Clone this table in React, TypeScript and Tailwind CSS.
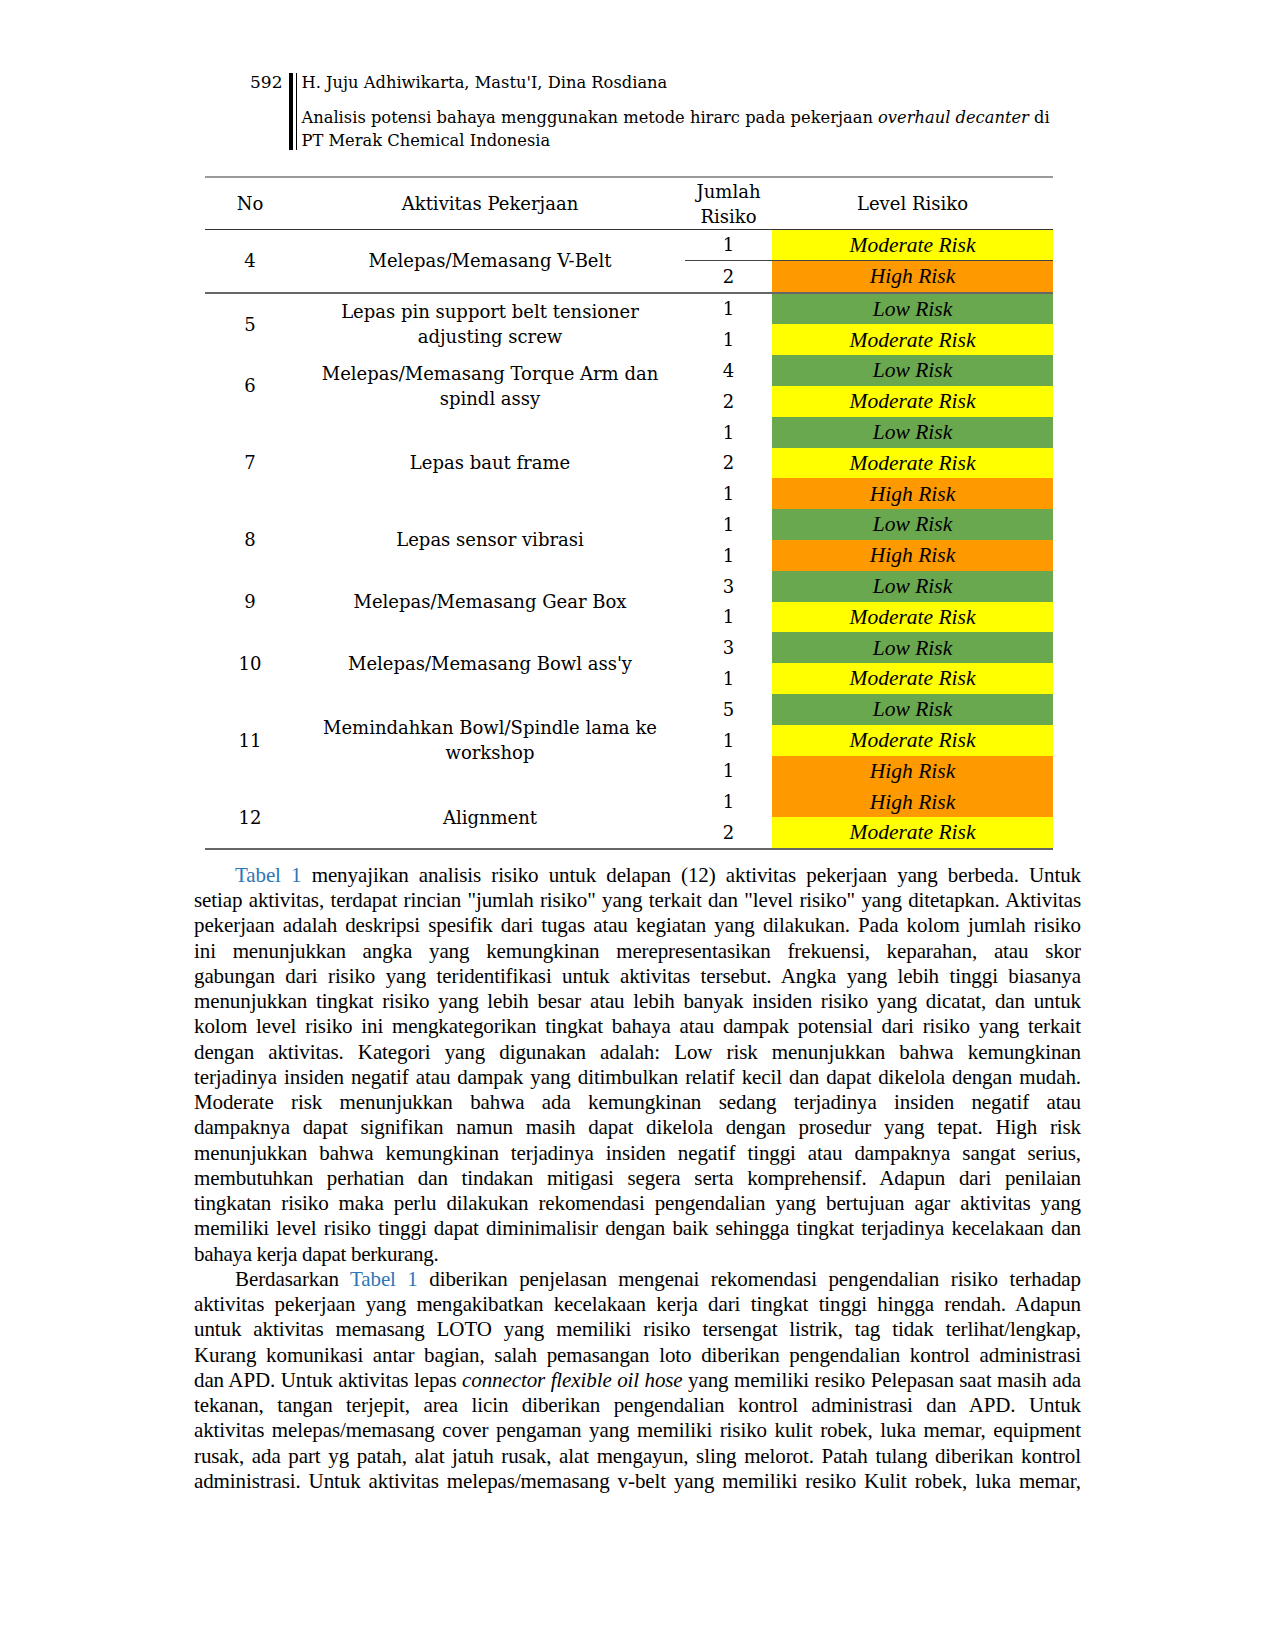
import React from 'react';

type Level = 'L' | 'M' | 'H';

interface Group {
  no: string;
  act: string[];
  rows: [number, Level][];
}

const groups: Group[] = [
  { no: '4', act: ['Melepas/Memasang V-Belt'], rows: [[1, 'M'], [2, 'H']] },
  { no: '5', act: ['Lepas pin support belt tensioner', 'adjusting screw'], rows: [[1, 'L'], [1, 'M']] },
  { no: '6', act: ['Melepas/Memasang Torque Arm dan', 'spindl assy'], rows: [[4, 'L'], [2, 'M']] },
  { no: '7', act: ['Lepas baut frame'], rows: [[1, 'L'], [2, 'M'], [1, 'H']] },
  { no: '8', act: ['Lepas sensor vibrasi'], rows: [[1, 'L'], [1, 'H']] },
  { no: '9', act: ['Melepas/Memasang Gear Box'], rows: [[3, 'L'], [1, 'M']] },
  { no: '10', act: ["Melepas/Memasang Bowl ass'y"], rows: [[3, 'L'], [1, 'M']] },
  { no: '11', act: ['Memindahkan Bowl/Spindle lama ke', 'workshop'], rows: [[5, 'L'], [1, 'M'], [1, 'H']] },
  { no: '12', act: ['Alignment'], rows: [[1, 'H'], [2, 'M']] },
];

const levelStyle = (l: Level) => {
  switch (l) {
    case 'L': return 'bg-[#6aa84f]';
    case 'M': return 'bg-[#ffff00]';
    case 'H': return 'bg-[#ff9900]';
  }
};

const levelText = (l: Level) => {
  switch (l) {
    case 'L': return 'Low Risk';
    case 'M': return 'Moderate Risk';
    case 'H': return 'High Risk';
  }
};

const Link = ({ children }: { children: React.ReactNode }) => (
  <span className="text-[#2e75b6]">{children}</span>
);

// paragraph lines, kept as in the page so the justified breaks match
const para1: React.ReactNode[] = [
  <><Link>Tabel 1</Link> menyajikan analisis risiko untuk delapan (12) aktivitas pekerjaan yang berbeda. Untuk</>,
  'setiap aktivitas, terdapat rincian "jumlah risiko" yang terkait dan "level risiko" yang ditetapkan. Aktivitas',
  'pekerjaan adalah deskripsi spesifik dari tugas atau kegiatan yang dilakukan. Pada kolom jumlah risiko',
  'ini menunjukkan angka yang kemungkinan merepresentasikan frekuensi, keparahan, atau skor',
  'gabungan dari risiko yang teridentifikasi untuk aktivitas tersebut. Angka yang lebih tinggi biasanya',
  'menunjukkan tingkat risiko yang lebih besar atau lebih banyak insiden risiko yang dicatat, dan untuk',
  'kolom level risiko ini mengkategorikan tingkat bahaya atau dampak potensial dari risiko yang terkait',
  'dengan aktivitas. Kategori yang digunakan adalah: Low risk menunjukkan bahwa kemungkinan',
  'terjadinya insiden negatif atau dampak yang ditimbulkan relatif kecil dan dapat dikelola dengan mudah.',
  'Moderate risk menunjukkan bahwa ada kemungkinan sedang terjadinya insiden negatif atau',
  'dampaknya dapat signifikan namun masih dapat dikelola dengan prosedur yang tepat. High risk',
  'menunjukkan bahwa kemungkinan terjadinya insiden negatif tinggi atau dampaknya sangat serius,',
  'membutuhkan perhatian dan tindakan mitigasi segera serta komprehensif. Adapun dari penilaian',
  'tingkatan risiko maka perlu dilakukan rekomendasi pengendalian yang bertujuan agar aktivitas yang',
  'memiliki level risiko tinggi dapat diminimalisir dengan baik sehingga tingkat terjadinya kecelakaan dan',
];

const para2: React.ReactNode[] = [
  <>Berdasarkan <Link>Tabel 1</Link> diberikan penjelasan mengenai rekomendasi pengendalian risiko terhadap</>,
  'aktivitas pekerjaan yang mengakibatkan kecelakaan kerja dari tingkat tinggi hingga rendah. Adapun',
  'untuk aktivitas memasang LOTO yang memiliki risiko tersengat listrik, tag tidak terlihat/lengkap,',
  'Kurang komunikasi antar bagian, salah pemasangan loto diberikan pengendalian kontrol administrasi',
  <>dan APD. Untuk aktivitas lepas <i>connector flexible oil hose</i> yang memiliki resiko Pelepasan saat masih ada</>,
  'tekanan, tangan terjepit, area licin diberikan pengendalian kontrol administrasi dan APD. Untuk',
  'aktivitas melepas/memasang cover pengaman yang memiliki risiko kulit robek, luka memar, equipment',
  'rusak, ada part yg patah, alat jatuh rusak, alat mengayun, sling melorot. Patah tulang diberikan kontrol',
  'administrasi. Untuk aktivitas melepas/memasang v-belt yang memiliki resiko Kulit robek, luka memar,',
];

const Line = ({ children, indent }: { children: React.ReactNode; indent?: boolean }) => (
  <div className={`text-justify [text-align-last:justify] tracking-[-0.1px] ${indent ? 'pl-[41px]' : ''}`}>
    {children}
  </div>
);

const App = () => {
  return (
    <div className="min-h-[1650px] w-[1275px] bg-white text-black">
      {/* running head */}
      <div className="flex pt-[71px] pl-[250px] font-['DejaVu_Serif',serif]">
        <div className="pr-[7px] text-[17px] leading-[23px]">592</div>
        <div className="my-[2px] flex">
          <div className="w-[4px] bg-black" />
          <div className="ml-[3px] w-[1px] bg-black" />
        </div>
        <div className="pl-[4px] text-[16.3px] leading-[23px] whitespace-nowrap">
          <div>H. Juju Adhiwikarta, Mastu'I, Dina Rosdiana</div>
          <div className="mt-[12px]">
            Analisis potensi bahaya menggunakan metode hirarc pada pekerjaan <i>overhaul decanter</i> di
          </div>
          <div>PT Merak Chemical Indonesia</div>
        </div>
      </div>

      {/* table */}
      <div className="ml-[205px] mt-[24px] w-[848px] font-['DejaVu_Serif',serif] text-[18px]">
        <div className="flex h-[54px] items-center border-t-2 border-b border-t-[#9a9a9a] border-b-[#333] text-center leading-[25px]">
          <div className="w-[90px]">No</div>
          <div className="w-[390px]">Aktivitas Pekerjaan</div>
          <div className="w-[87px]">Jumlah<br />Risiko</div>
          <div className="flex-1">Level Risiko</div>
        </div>

        {groups.map((g, gi) => (
          <div key={g.no} className={`flex ${gi === 0 ? 'border-b-2 border-[#666]' : ''}`}>
            <div className="flex w-[90px] items-center justify-center">{g.no}</div>
            <div className="flex w-[390px] flex-col items-center justify-center text-center leading-[25px]">
              {g.act.map(a => <div key={a}>{a}</div>)}
            </div>
            <div className="flex-1">
              {g.rows.map(([n, l], ri) => (
                <div
                  key={ri}
                  className={`flex h-[30.8px] ${gi === 0 && ri === 0 ? 'border-b border-[#444]' : ''}`}
                >
                  <div className="flex w-[87px] items-center justify-center">{n}</div>
                  <div className={`flex flex-1 items-center justify-center font-['Liberation_Serif',serif] text-[21.5px] italic ${levelStyle(l)}`}>
                    {levelText(l)}
                  </div>
                </div>
              ))}
            </div>
          </div>
        ))}
        <div className="h-[2px] bg-[#666]" />
      </div>

      {/* body text */}
      <div className="ml-[194px] mt-[13px] w-[887px] font-['Liberation_Serif',serif] text-[21px] leading-[25.25px]">
        {para1.map((t, i) => <Line key={i} indent={i === 0}>{t}</Line>)}
        <div className="tracking-[-0.3px]">bahaya kerja dapat berkurang.</div>
        {para2.map((t, i) => <Line key={i} indent={i === 0}>{t}</Line>)}
      </div>
    </div>
  );
};

export default App;
